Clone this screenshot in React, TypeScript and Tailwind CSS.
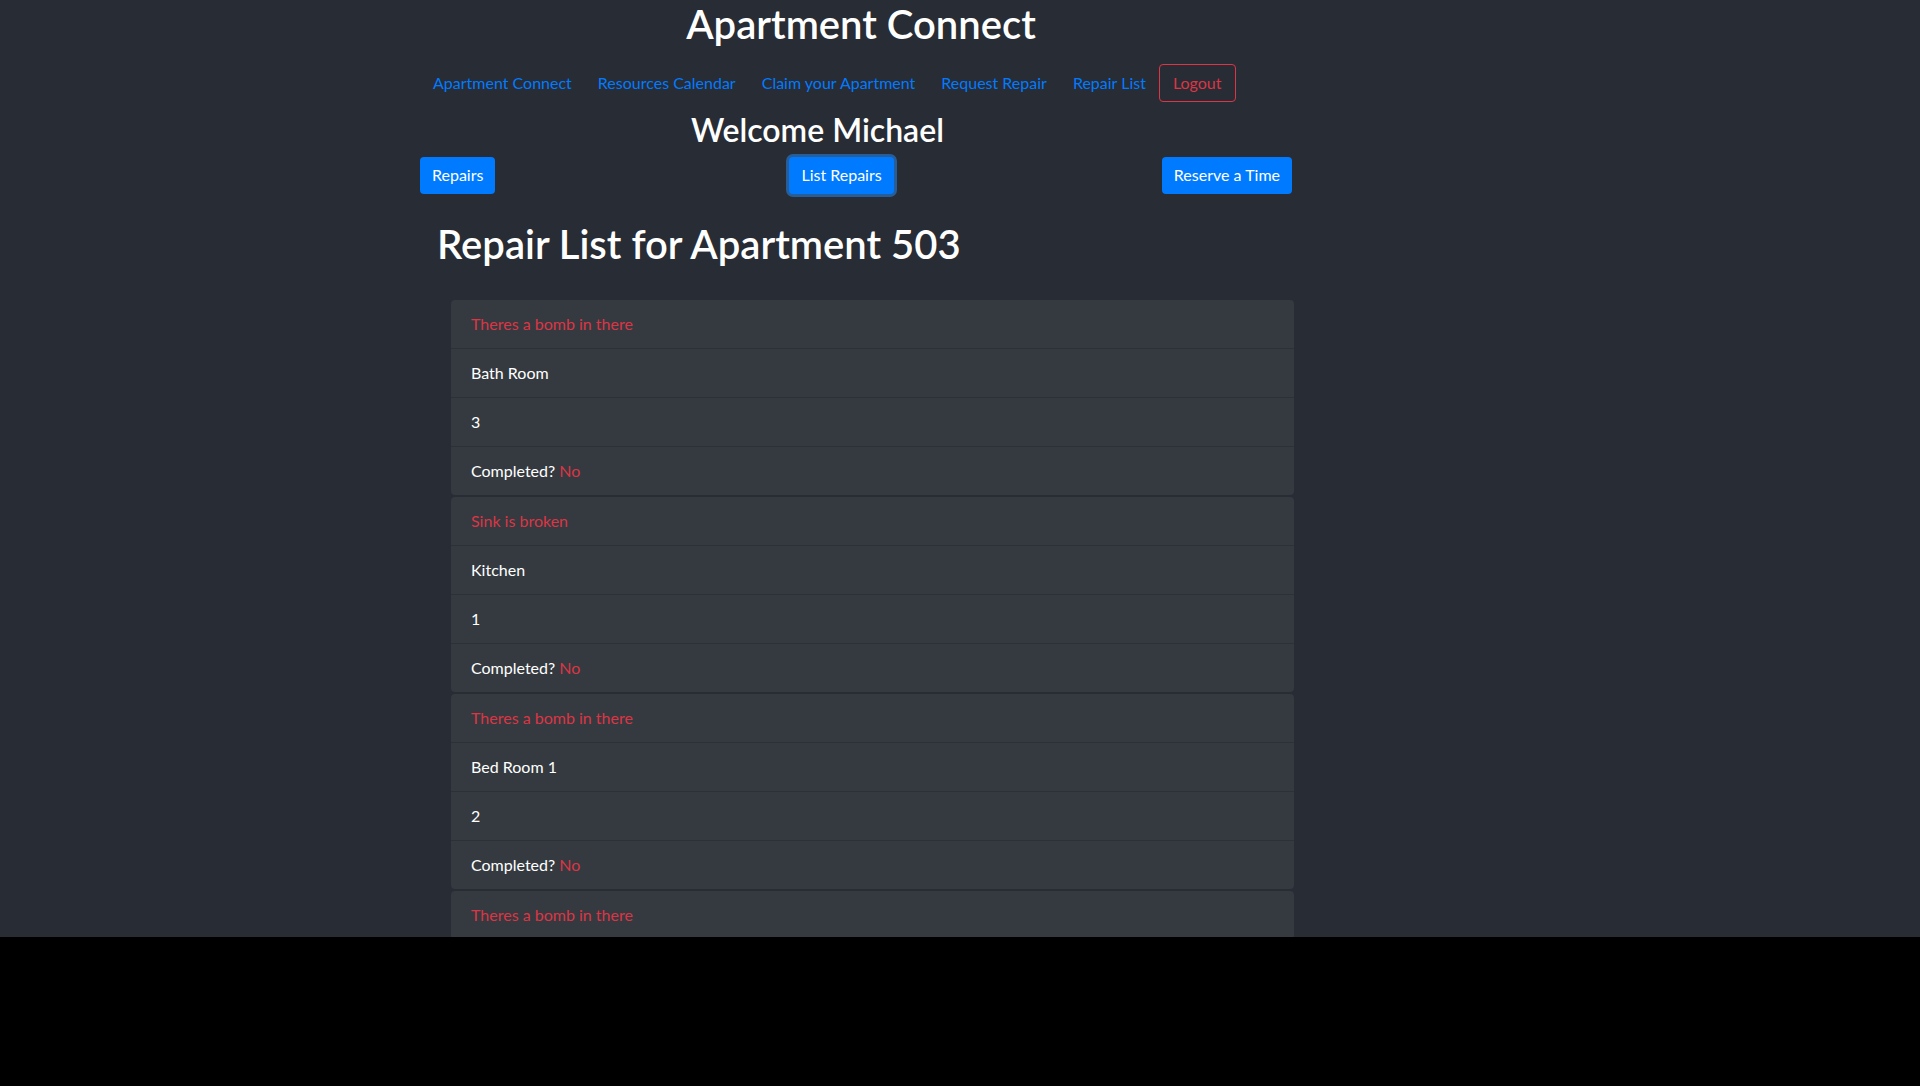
import React from 'react'

interface Repair {
  id: number
  description: string
  room: string
  priority: number
  completed: boolean
}

const repairs: Repair[] = [
  { id: 1, description: 'Theres a bomb in there', room: 'Bath Room', priority: 3, completed: false },
  { id: 2, description: 'Sink is broken', room: 'Kitchen', priority: 1, completed: false },
  { id: 3, description: 'Theres a bomb in there', room: 'Bed Room 1', priority: 2, completed: false },
  { id: 4, description: 'Theres a bomb in there', room: '', priority: 0, completed: false },
]

const navLinks = ['Apartment Connect', 'Resources Calendar', 'Claim your Apartment', 'Request Repair', 'Repair List']

function RepairCard({ repair, short }: { repair: Repair; short?: boolean }) {
  return (
    <ul className="mb-[2px] overflow-hidden rounded-[4px] bg-[#343a40]">
      <li className="h-[48px] px-5 py-3 leading-6 text-[#dc3545]">{repair.description}</li>
      {!short && (
        <>
          <li className="h-[49px] border-t border-[#2c3137] px-5 py-3 leading-6">{repair.room}</li>
          <li className="h-[49px] border-t border-[#2c3137] px-5 py-3 leading-6">{repair.priority}</li>
          <li className="h-[49px] border-t border-[#2c3137] px-5 py-3 leading-6">
            Completed? <span className="text-[#dc3545]">{repair.completed ? 'Yes' : 'No'}</span>
          </li>
        </>
      )}
    </ul>
  )
}

export default function App() {
  return (
    <div className="h-[1086px] bg-black" style={{ fontFamily: '"Segoe UI", Lato, "Open Sans", sans-serif' }}>
      <div className="h-[937px] overflow-hidden bg-[#282c34] text-white">
        <div className="ml-[420px] w-[874px]">
          {/* Header */}
          <h1 className="h-[48px] pl-[8px] text-center text-[40px] font-semibold leading-[48px]">Apartment Connect</h1>

          {/* Nav */}
          <nav className="mt-[16px] flex h-[38px] items-center">
            {navLinks.map(link => (
              <a key={link} className="px-[13px] text-[16px] text-[#007bff]">
                {link}
              </a>
            ))}
            <button className="h-[38px] rounded-[4px] border border-[#dc3545] px-[13px] text-[16px] text-[#dc3545]">
              Logout
            </button>
          </nav>

          <h2 className="mt-[5px] h-[46px] pl-[271px] text-[32px] font-semibold leading-[46px]">Welcome Michael</h2>

          {/* Action buttons */}
          <div className="mt-[3px] flex h-[38px] items-center">
            <button className="h-[37px] rounded-[4px] bg-[#007bff] px-3 text-[16px]">Repairs</button>
            <button className="ml-[294px] h-[37px] rounded-[4px] bg-[#007bff] px-3 text-[16px] shadow-[0_0_0_3px_rgba(38,143,255,0.5)]">
              List Repairs
            </button>
            <button className="ml-auto mr-[2px] h-[37px] rounded-[4px] bg-[#007bff] px-3 text-[16px]">Reserve a Time</button>
          </div>

          <h1 className="mt-[24px] h-[52px] pl-[17px] text-[40px] font-semibold leading-[52px]">
            Repair List for Apartment 503
          </h1>

          <div className="mt-[30px] ml-[31px] text-[16px]">
            {repairs.map((r, i) => (
              <RepairCard key={r.id} repair={r} short={i === repairs.length - 1} />
            ))}
          </div>
        </div>
      </div>
    </div>
  )
}
